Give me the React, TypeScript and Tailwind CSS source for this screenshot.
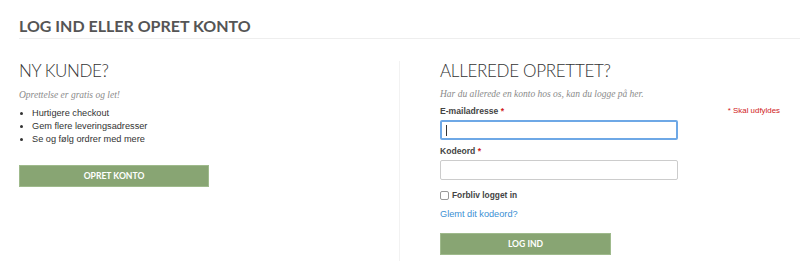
import React from 'react';

const heading = "font-['Lato','Open_Sans',sans-serif]";
const sans = "font-['Liberation_Sans','Helvetica',sans-serif]";
const serif = "font-['Liberation_Serif','Georgia',serif]";

export default function App() {
  return (
    <div className="w-[800px] h-[261px] overflow-hidden bg-white">
      {/* page title */}
      <div className="pl-[19px] pt-[16px]">
        <h1 className={`${heading} text-[16px] leading-[20px] font-bold text-[#555]`}>
          LOG IND ELLER OPRET KONTO
        </h1>
        <div className="mt-[2px] h-[1px] bg-[#eeeeee]" />
      </div>

      <div className="flex mt-[22px]">
        {/* new customer */}
        <div className="w-[400px] pl-[19px] border-r border-[#f2f2f2] h-[200px]">
          <h2 className={`${heading} text-[17px] leading-[20px] font-light text-[#333] tracking-[-0.4px]`}>NY KUNDE?</h2>
          <p className={`${serif} italic text-[9.5px] leading-[14px] text-[#8a8a8a] mt-[7px]`}>
            Oprettelse er gratis og let!
          </p>
          <ul className={`${sans} text-[9.2px] leading-[13px] text-[#333] mt-[5px] pl-[13px] list-disc`}>
            <li>Hurtigere checkout</li>
            <li>Gem flere leveringsadresser</li>
            <li>Se og følg ordrer med mere</li>
          </ul>
          <button className={`${heading} mt-[19px] w-[190px] h-[22px] bg-[#88a573] border border-[#9fba8c] text-white text-[8.6px] font-bold`}>
            OPRET KONTO
          </button>
        </div>

        {/* existing customer */}
        <div className="flex-1 pl-[40px] pr-[20px]">
          <h2 className={`${heading} text-[17px] leading-[20px] font-light text-[#333] tracking-[-0.3px]`}>ALLEREDE OPRETTET?</h2>
          <p className={`${serif} italic text-[9.5px] leading-[14px] text-[#8a8a8a] mt-[6px]`}>
            Har du allerede en konto hos os, kan du logge på her.
          </p>
          <div className="flex justify-between items-center mt-[3px]">
            <label className={`${sans} text-[8.6px] leading-[14px] font-bold text-[#444]`}>
              E-mailadresse <span className="text-[#d0201a]">*</span>
            </label>
            <span className={`${sans} text-[7.9px] leading-[14px] text-[#d0201a]`}>* Skal udfyldes</span>
          </div>
          <div className="mt-[2px] w-[238px] h-[20px] rounded-[2px] border-2 border-[#6ea8e6] flex items-center pl-[4px]">
            <div className="w-[1px] h-[11px] bg-[#333]" />
          </div>
          <label className={`${sans} block mt-[4px] text-[8.6px] leading-[14px] font-bold text-[#444]`}>
            Kodeord <span className="text-[#d0201a]">*</span>
          </label>
          <div className="mt-[2px] w-[238px] h-[20px] rounded-[2px] border border-[#cccccc]" />
          <div className="flex items-center gap-[3px] mt-[8px]">
            <div className="w-[9px] h-[9px] rounded-[2px] border border-[#999] bg-white" />
            <span className={`${sans} text-[8.4px] leading-[14px] font-bold text-[#444]`}>Forbliv logget in</span>
          </div>
          <a className={`${sans} block mt-[5px] text-[9.2px] leading-[14px] text-[#3b8fd3]`}>Glemt dit kodeord?</a>
          <button className={`${heading} mt-[12px] w-[171px] h-[22px] bg-[#88a573] border border-[#9fba8c] text-white text-[8.6px] font-bold`}>
            LOG IND
          </button>
        </div>
      </div>
    </div>
  );
}
